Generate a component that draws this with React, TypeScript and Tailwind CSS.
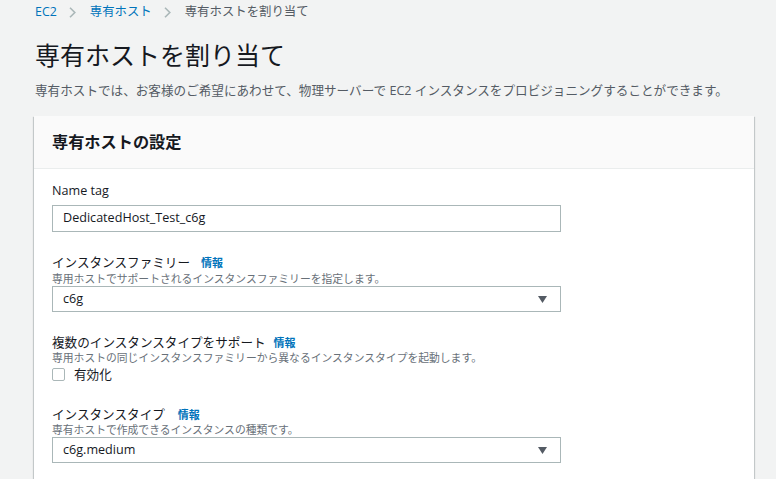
import React from "react";

const FONT = { fontFamily: '"Open Sans", "Noto Sans CJK JP", sans-serif' };

function Chevron() {
  return (
    <svg width="7" height="11" viewBox="0 0 7 11" className="ml-[12px] mr-[14px]">
      <path d="M1 0.8 L5.8 5.5 L1 10.2" fill="none" stroke="#aab7b8" strokeWidth="1.6" />
    </svg>
  );
}

function SelectBox({ value }: { value: string }) {
  return (
    <div className="w-[509px] h-[26px] border border-[#aab7b8] bg-white flex items-center justify-between pl-[10px] pr-[13px]">
      <span className="text-[12.6px] text-[#16191f]">{value}</span>
      <svg width="9" height="7" viewBox="0 0 9 7">
        <path d="M0 0 L9 0 L4.5 7 Z" fill="#545b64" />
      </svg>
    </div>
  );
}

export default function App() {
  return (
    <div className="w-[776px] h-[479px] bg-[#f2f3f3] overflow-hidden" style={FONT}>
      <div className="pl-[35px]">
        <div className="pt-[2px] h-[22px] flex items-center text-[12.4px] leading-[20px]">
          <span className="text-[#0073bb]">EC2</span>
          <Chevron />
          <span className="text-[#0073bb]">専有ホスト</span>
          <Chevron />
          <span className="text-[#545b64]">専有ホストを割り当て</span>
        </div>
        <div className="mt-[17px] text-[25px] leading-[32px] text-[#16191f]">専有ホストを割り当て</div>
        <div className="mt-[10px] text-[12.6px] leading-[20px] text-[#545b64]">
          専有ホストでは、お客様のご希望にあわせて、物理サーバーで EC2 インスタンスをプロビジョニングすることができます。
        </div>
      </div>
      <div className="ml-[34px] mt-[15px] w-[720px] h-[400px] bg-white shadow-[0_1px_1px_0_rgba(0,28,36,0.3),1px_1px_1px_0_rgba(0,28,36,0.15),-1px_1px_1px_0_rgba(0,28,36,0.15)]">
        <div className="h-[53px] bg-[#fafafa] border-b border-[#eaeded] flex items-center pl-[18px]">
          <span className="text-[16.2px] font-bold text-[#16191f]">専有ホストの設定</span>
        </div>
        <div className="pl-[18px] pt-[14px]">
          <div className="text-[12.6px] leading-[16px] text-[#16191f]">Name tag</div>
          <div className="mt-[6px] w-[509px] h-[27px] border border-[#aab7b8] bg-white flex items-center pl-[10px] text-[12.6px] text-[#16191f]">
            DedicatedHost_Test_c6g
          </div>

          <div className="mt-[23px] flex items-center text-[12.6px] leading-[16px] text-[#16191f]">
            インスタンスファミリー
            <span className="text-[11px] font-bold text-[#0073bb] ml-[11px]">情報</span>
          </div>
          <div className="text-[10.8px] leading-[15px] text-[#687078]">専用ホストでサポートされるインスタンスファミリーを指定します。</div>
          <SelectBox value="c6g" />

          <div className="mt-[23px] flex items-center text-[12.6px] leading-[16px] text-[#16191f]">
            複数のインスタンスタイプをサポート
            <span className="text-[11px] font-bold text-[#0073bb] ml-[8px]">情報</span>
          </div>
          <div className="text-[10.8px] leading-[14px] text-[#687078]">専用ホストの同じインスタンスファミリーから異なるインスタンスタイプを起動します。</div>
          <div className="mt-[3px] h-[13px] flex items-center">
            <span className="w-[13px] h-[13px] border border-[#aab7b8] rounded-[2px] bg-white"></span>
            <span className="ml-[9px] text-[12.6px] leading-[13px] text-[#16191f]">有効化</span>
          </div>

          <div className="mt-[26px] flex items-center text-[12.6px] leading-[16px] text-[#16191f]">
            インスタンスタイプ
            <span className="text-[11px] font-bold text-[#0073bb] ml-[13px]">情報</span>
          </div>
          <div className="text-[10.8px] leading-[14px] text-[#687078]">専有ホストで作成できるインスタンスの種類です。</div>
          <SelectBox value="c6g.medium" />
        </div>
      </div>
    </div>
  );
}
